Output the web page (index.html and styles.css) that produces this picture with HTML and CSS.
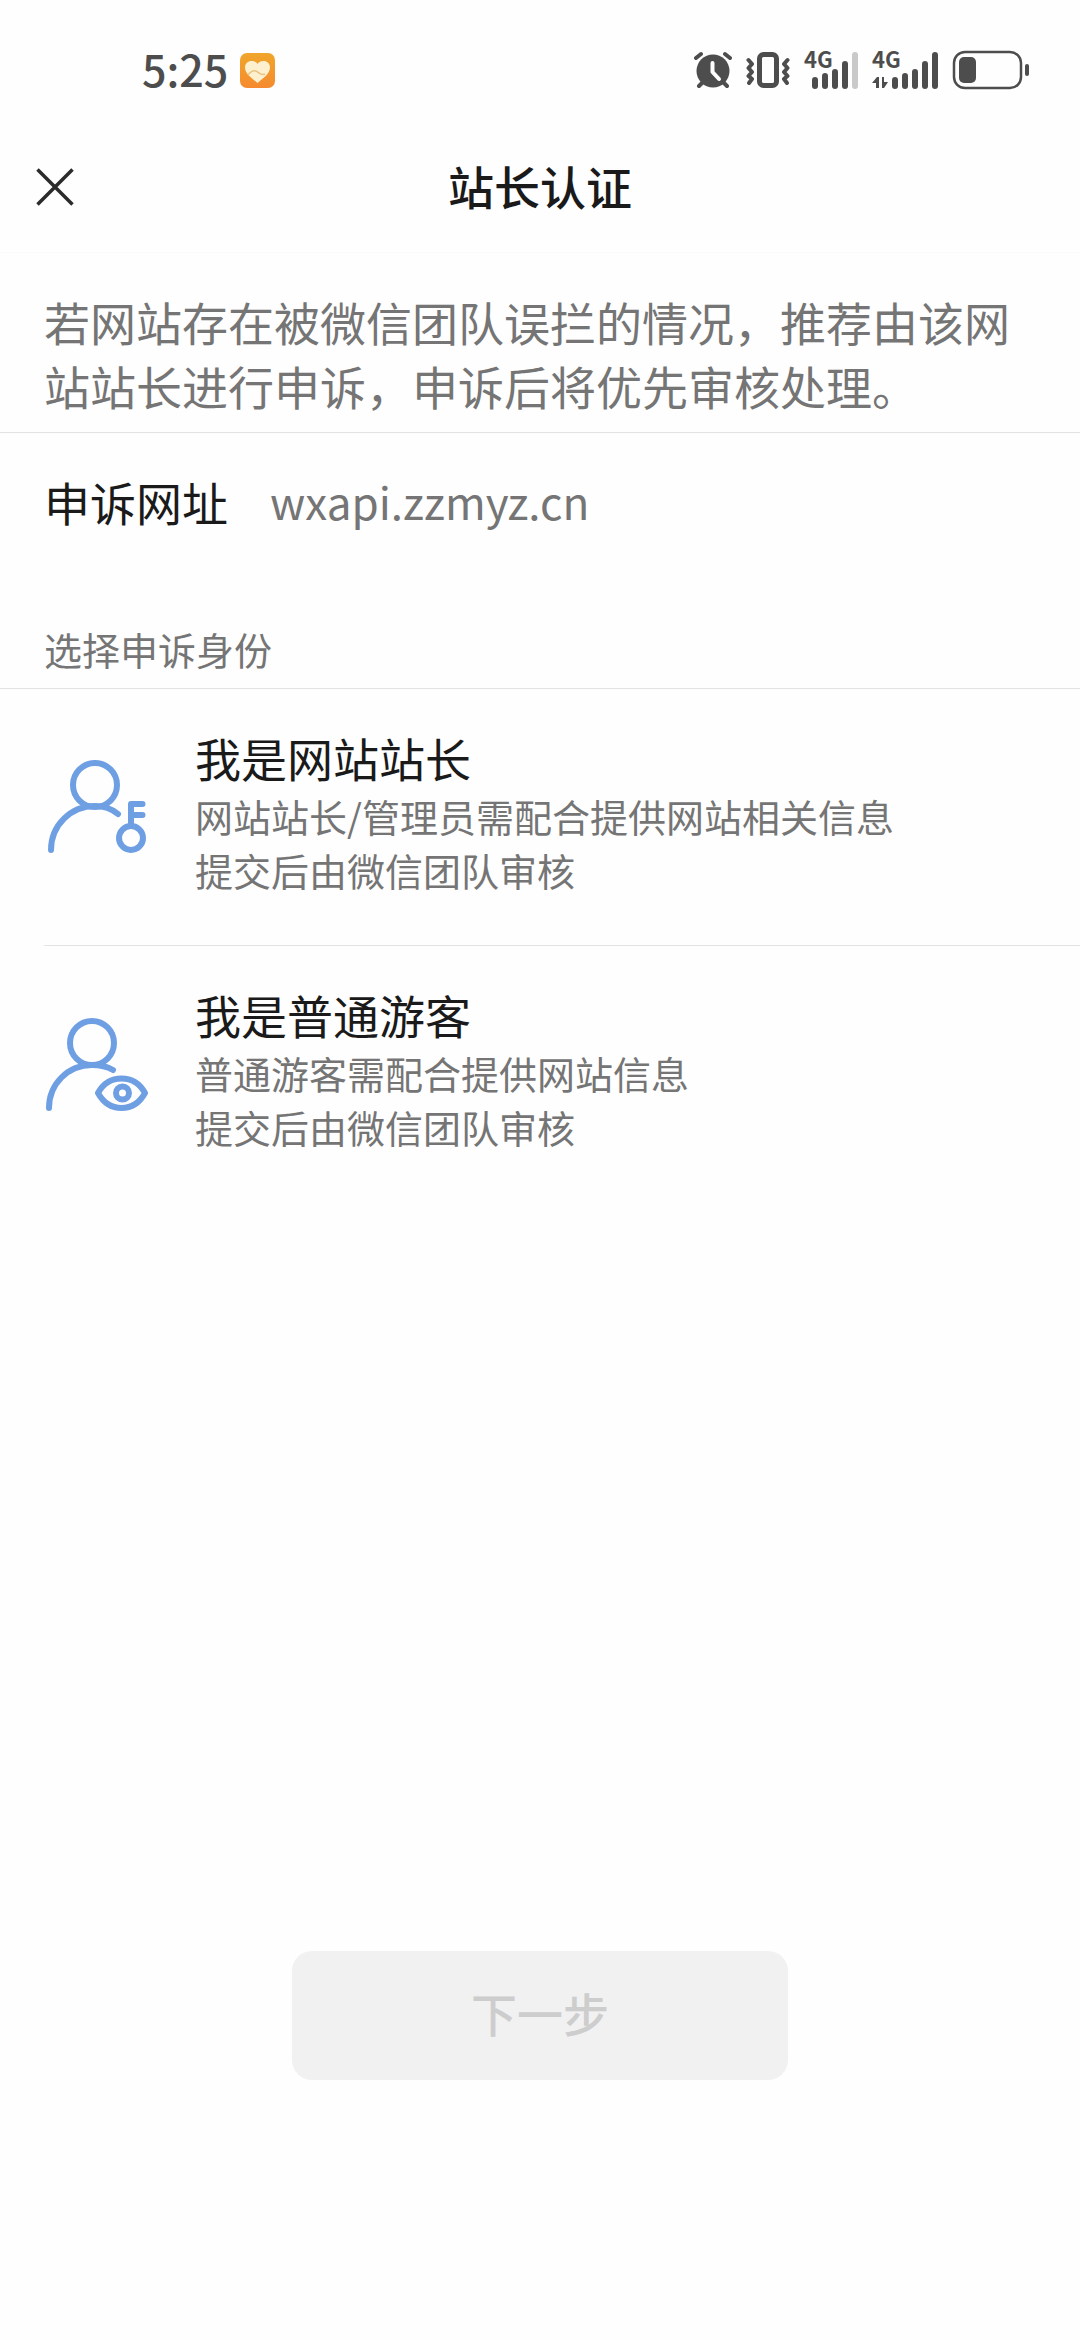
FILE: index.html
```html
<!DOCTYPE html>
<html lang="zh-CN">
<head>
    <meta charset="UTF-8">
    <meta name="viewport" content="width=device-width, initial-scale=1.0">
    <title>站长认证</title>
    <link rel="stylesheet" href="styles.css">
</head>
<body>
    <div class="status-bar">
        <div class="status-left">
            <span class="time">5:25</span>
            <svg width="35" height="35" viewBox="0 0 35 35">
                <defs>
                    <linearGradient id="badge" x1="0" y1="0" x2="0" y2="1">
                        <stop offset="0" stop-color="#f0a62c"/>
                        <stop offset="1" stop-color="#f58a2e"/>
                    </linearGradient>
                </defs>
                <rect width="35" height="35" rx="7" fill="url(#badge)"/>
                <path d="M17.500 30C13 26 5 21 5 14.500C5 10.500 8 8 11.500 8C14 8 16.500 9 17.500 11C18.500 9 21 8 23.500 8C27 8 30 10.500 30 14.500C30 21 22 26 17.500 30Z" fill="#fdf0cf"/>
                <path d="M8 22C11 18 13 17 16 18C19 19.500 21 23 25 21" fill="none" stroke="#e8c583" stroke-width="1.500"/>
            </svg>
        </div>
        <div class="status-right">
            <svg class="alarm" width="38" height="38" viewBox="0 0 38 38">
                <g fill="none" stroke="#4d4d4d" stroke-width="4" stroke-linecap="round">
                    <path d="M2 7L7 3M36 7L31 3M9 31L5 35M29 31L33 35"/>
                </g>
                <circle cx="19" cy="20" r="16.500" fill="#4d4d4d"/>
                <path d="M18.500 12V21L25 28" fill="none" stroke="#fefefe" stroke-width="4" stroke-linecap="round" stroke-linejoin="round"/>
            </svg>
            <svg class="vibrate" width="44" height="38" viewBox="0 0 44 38">
                <g fill="none" stroke="#4d4d4d">
                    <rect x="13.500" y="3.500" width="17" height="31" rx="4" stroke-width="5"/>
                    <path d="M2.500 9L6 13L2.500 17L6 21L2.500 25L6 28L3 32M41.500 9L38 13L41.500 17L38 21L41.500 25L38 28L41 32" stroke-width="4" stroke-linecap="round" stroke-linejoin="round"/>
                </g>
            </svg>
            <svg class="signal-one" width="54" height="58" viewBox="0 -10 54 58">
                <text class="network" x="0" y="17">4G</text>
                <g fill="#4d4d4d">
                    <rect x="8" y="26" width="6" height="12" rx="3"/>
                    <rect x="18" y="22" width="6" height="16" rx="3"/>
                    <rect x="28" y="18" width="6" height="20" rx="3"/>
                    <rect x="38" y="10" width="6" height="28" rx="3"/>
                    <rect x="48" y="1" width="6" height="37" rx="3" fill="#c9c9c9"/>
                </g>
            </svg>
            <svg class="signal-two" width="66" height="58" viewBox="0 -10 66 58">
                <text class="network" x="0" y="17">4G</text>
                <g fill="#4d4d4d">
                    <path d="M0 32L5 26H7V37H4V32ZM10 26H12V31H16L12 37H10Z"/>
                    <rect x="20" y="26" width="6" height="12" rx="3"/>
                    <rect x="30" y="22" width="6" height="16" rx="3"/>
                    <rect x="40" y="18" width="6" height="20" rx="3"/>
                    <rect x="50" y="10" width="6" height="28" rx="3"/>
                    <rect x="60" y="1" width="6" height="37" rx="3"/>
                </g>
            </svg>
            <svg class="battery" width="78" height="40" viewBox="0 0 78 40">
                <rect x="2" y="2" width="67" height="36" rx="11" fill="none" stroke="#4d4d4d" stroke-width="2.500"/>
                <rect x="7" y="7" width="17" height="26" rx="5" fill="#4d4d4d"/>
                <rect x="73" y="14" width="4" height="12" rx="2" fill="#4d4d4d"/>
            </svg>
        </div>
    </div>

    <header class="navbar">
        <button class="close" type="button" aria-label="关闭">
            <svg width="38" height="38" viewBox="0 0 38 38">
                <path d="M1.500 1.500L36.500 36.500M36.500 1.500L1.500 36.500" stroke="#2b2b2b" stroke-width="3.500"/>
            </svg>
        </button>
        <h1>站长认证</h1>
    </header>

    <form class="content">
        <p class="intro">若网站存在被微信团队误拦的情况，推荐由该网站站长进行申诉，申诉后将优先审核处理。</p>

        <div class="url-row">
            <span class="url-label">申诉网址</span>
            <span class="url-value">wxapi.zzmyz.cn</span>
        </div>

        <h2 id="identity-title">选择申诉身份</h2>
        <div class="identities" role="radiogroup" aria-labelledby="identity-title">
            <label class="identity">
                <input type="radio" name="identity" value="owner">
                <svg class="identity-icon" width="104" height="104" viewBox="14 14 104 104">
                    <circle cx="65" cy="45" r="22"/>
                    <path d="M21 110C21 85 41 66 65 66C74 66 82 69 88 74"/>
                    <circle cx="101" cy="98" r="12"/>
                    <path d="M101 84V64H112.500M101 75H112.500"/>
                </svg>
                <span class="identity-text">
                    <strong>我是网站站长</strong>
                    <span>网站站长/管理员需配合提供网站相关信息</span>
                    <span>提交后由微信团队审核</span>
                </span>
            </label>
            <label class="identity">
                <input type="radio" name="identity" value="visitor">
                <svg class="identity-icon" width="104" height="104" viewBox="14 11 104 104">
                    <circle cx="62" cy="43" r="22"/>
                    <path d="M19 108C19 84 38 65 62 65C70 65 77 66.500 83 70"/>
                    <path d="M68 93C73 84 81 78.500 91.500 78.500C102 78.500 110 84 115 93C110 102 102 108 91.500 108C81 108 73 102 68 93Z"/>
                    <circle cx="92.500" cy="93" r="6.500"/>
                </svg>
                <span class="identity-text">
                    <strong>我是普通游客</strong>
                    <span>普通游客需配合提供网站信息</span>
                    <span>提交后由微信团队审核</span>
                </span>
            </label>
        </div>

        <div class="actions">
            <button class="next" type="submit" disabled>下一步</button>
        </div>
    </form>
</body>
</html>
```
FILE: styles.css
```css
* {
    box-sizing: border-box;
}
body {
    display: flex;
    flex-direction: column;
    min-height: 100vh;
    margin: 0;
    background-color: #fefefe;
    color: #1a1a1a;
    font-family: "Noto Sans CJK SC", sans-serif;
    font-size: 46px;
    line-height: 64px;
}
svg {
    display: block;
    flex: none;
}

/* status bar */
.status-bar {
    display: flex;
    justify-content: space-between;
    align-items: center;
    height: 122px;
    padding: 18px 50px 0 142px;
}
.status-left,
.status-right {
    display: flex;
    align-items: center;
}
.status-left {
    gap: 12px;
}
.time {
    padding-bottom: 4px;
    color: #4d4d4d;
    font-size: 43px;
    font-weight: 500;
}
.status-right {
    gap: 14px;
}
.network {
    fill: #4d4d4d;
    font-size: 22px;
    font-weight: 700;
}

/* title bar */
.navbar {
    display: grid;
    grid-template-columns: 1fr auto 1fr;
    align-items: center;
    height: 131px;
    padding: 0 36px;
    border-bottom: 1px solid #fbfbfb;
}
.close {
    justify-self: start;
    padding: 0;
    border: none;
    background: none;
    cursor: pointer;
}
h1 {
    margin: 0;
    padding-bottom: 4px;
    font-size: 46px;
    font-weight: 500;
}

.content {
    display: flex;
    flex-direction: column;
    flex: 1;
}
.intro {
    margin: 0;
    padding: 36px 44px 15px;
    border-bottom: 1px solid #e3e3e3;
    color: #757575;
}
.url-row {
    display: flex;
    gap: 42px;
    padding: 36px 44px 42px;
}
.url-value {
    color: #757575;
    font-size: 44px;
}
h2 {
    margin: 0;
    padding: 47px 44px 12px;
    border-bottom: 1px solid #e3e3e3;
    color: #757575;
    font-size: 38px;
    font-weight: 400;
    line-height: 54px;
}

/* identity list */
.identity {
    display: flex;
    gap: 47px;
    margin-left: 44px;
    padding: 36px 44px 48px 0;
    cursor: pointer;
}
.identity + .identity {
    border-top: 1px solid #e3e3e3;
}
.identity input {
    position: absolute;
    opacity: 0;
}
.identity-icon {
    margin-top: 29px;
    fill: none;
    stroke: #6f9fe3;
    stroke-width: 6;
    stroke-linecap: round;
    stroke-linejoin: round;
}
.identity-text {
    display: flex;
    flex-direction: column;
    color: #757575;
    font-size: 38px;
    line-height: 54px;
}
.identity-text strong {
    color: #1a1a1a;
    font-size: 46px;
    font-weight: 400;
    line-height: 64px;
}

.actions {
    display: flex;
    justify-content: center;
    margin-top: auto;
    padding-bottom: 260px;
}
.next {
    width: 46%;
    padding: 29px 0 36px;
    border: none;
    border-radius: 20px;
    background-color: #f1f1f1;
    color: #cdcdcd;
    font: inherit;
    font-weight: 500;
}
```
